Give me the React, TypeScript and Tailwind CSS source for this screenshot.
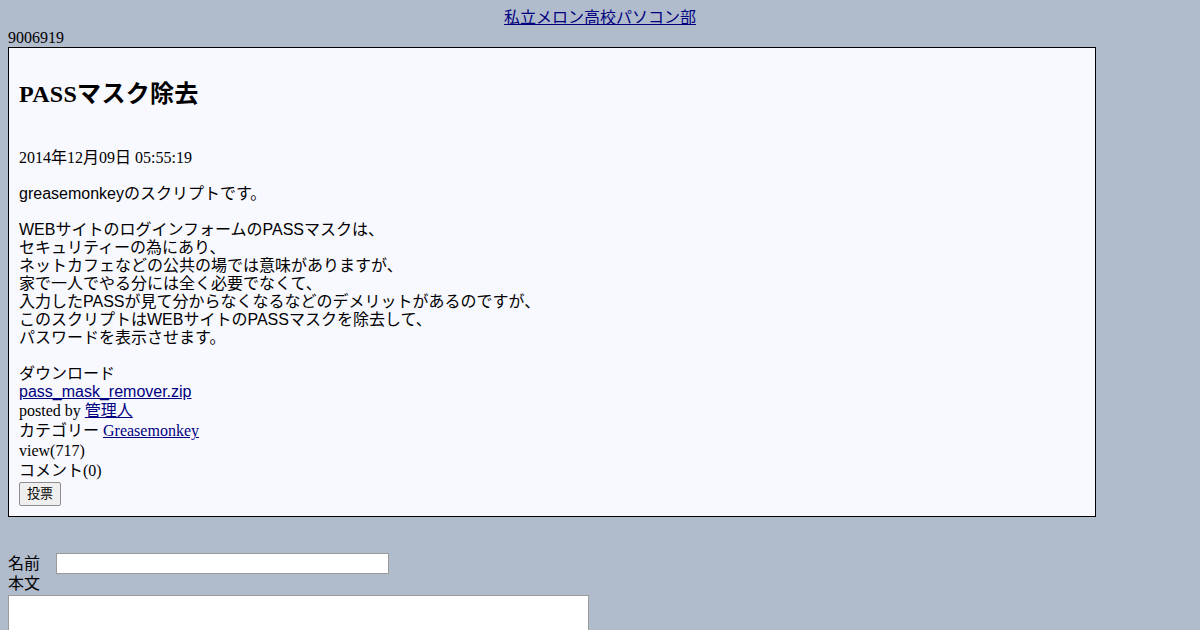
import React from 'react';

const serif = 'font-["Liberation_Serif","Noto_Sans_CJK_JP",serif]';
const sans = 'font-["Liberation_Sans","Noto_Sans_CJK_JP",sans-serif]';

const bodyLines = [
  'greasemonkeyのスクリプトです。',
  '',
  'WEBサイトのログインフォームのPASSマスクは、',
  'セキュリティーの為にあり、',
  'ネットカフェなどの公共の場では意味がありますが、',
  '家で一人でやる分には全く必要でなくて、',
  '入力したPASSが見て分からなくなるなどのデメリットがあるのですが、',
  'このスクリプトはWEBサイトのPASSマスクを除去して、',
  'パスワードを表示させます。',
  '',
  'ダウンロード',
];

export default function App() {
  return (
    <div className={`min-h-[630px] w-[1200px] bg-[#b0bbcc] p-2 text-[16px] text-black ${serif}`}>
      {/* header */}
      <div className="text-center leading-[20px]">
        <a href="#" className="text-[#000080] underline">私立メロン高校パソコン部</a>
      </div>
      <div className="leading-[19px]">9006919</div>

      {/* article */}
      <div className="w-[1088px] border border-black bg-[#f8f8ff] px-[10px] pb-[10px] pt-[10px]">
        <h2 className="mt-[22px] text-[24px] font-bold leading-[28px] tracking-[0.3px]">PASSマスク除去</h2>
        <div className="mt-[41px] leading-[18px]">2014年12月09日 05:55:19</div>
        <div className={`mt-[18px] leading-[18px] ${sans}`}>
          {bodyLines.map((l, i) => (
            <div key={i} className="h-[18px]">{l}</div>
          ))}
          <a href="#" className="text-[#000080] underline">pass_mask_remover.zip</a>
        </div>
        <div className="leading-[20px]">
          posted by <a href="#" className="text-[#000080] underline">管理人</a>
        </div>
        <div className="leading-[20px]">
          カテゴリー <a href="#" className="text-[#000080] underline">Greasemonkey</a>
        </div>
        <div className="leading-[20px]">view(717)</div>
        <div className="leading-[20px]">コメント(0)</div>
        <button className={`mt-[1px] h-[24px] w-[42px] rounded-[2px] border border-[#8f8f8f] bg-[#efefef] text-[13px] leading-[20px] ${sans}`}>
          投票
        </button>
      </div>

      {/* comment form */}
      <div className="mt-[36px] flex h-[21px] items-center leading-[20px]">
        <span className="w-[48px]">名前</span>
        <input className="h-[21px] w-[333px] border border-[#9a9a9a] bg-white" />
      </div>
      <div className="leading-[19px]">本文</div>
      <textarea className="mt-[2px] block h-[60px] w-[581px] border border-[#9a9a9a] bg-white" />
    </div>
  );
}
